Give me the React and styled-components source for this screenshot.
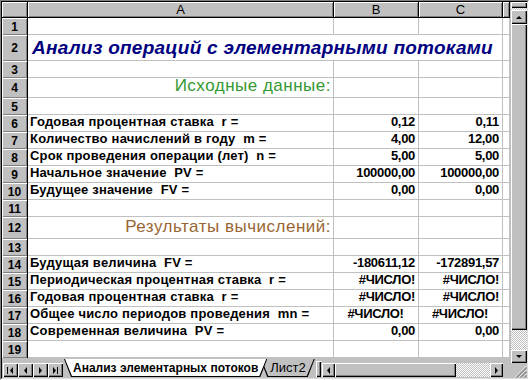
import styled, { createGlobalStyle, css } from "styled-components";

const GlobalStyle = createGlobalStyle`
  html, body { margin: 0; padding: 0; background: #c0c0c0; }
  body { font-family: "Liberation Sans", Arial, sans-serif; }
`;

const raised = css`
  background: #c0c0c0;
  box-shadow: inset 1px 1px #fff, inset -1px -1px #000, inset -2px -2px #808080;
`;

const dither = css`
  background: repeating-conic-gradient(#c0c0c0 0 25%, #fff 0 50%) 0 0 / 2px 2px;
`;

const Window = styled.div`
  width: 529px;
  height: 380px;
  box-sizing: border-box;
  border: 1px solid;
  border-color: #808080 #fff #fff #808080;
  background: #c0c0c0;
`;

const Inner = styled.div`
  height: 100%;
  box-sizing: border-box;
  border: 1px solid;
  border-color: #000 #dfdfdf #dfdfdf #000;
  display: flex;
`;

const LeftCol = styled.div`
  width: 508px;
  display: flex;
  flex-direction: column;
`;

const RightCol = styled.div`
  width: 17px;
  display: flex;
  flex-direction: column;
`;

const Sheet = styled.div`
  height: 356px;
  display: grid;
  grid-template-columns: 26px 306px 85px 84px 7px;
  grid-template-rows: ${(p) => p.$rows.map((h) => h + "px").join(" ")};
  background: #fff;
  overflow: hidden;
`;

const Corner = styled.div`
  background: #c0c0c0;
  border-right: 1px solid #000;
  border-bottom: 1px solid #000;
  box-shadow: inset 1px 1px #fff, inset -1px -1px #808080;
`;

const ColHead = styled.div`
  display: flex;
  align-items: center;
  justify-content: center;
  background: #c0c0c0;
  border-right: 1px solid #000;
  border-bottom: 1px solid #000;
  box-shadow: inset 1px 1px #fff, inset -1px -1px #808080;
  font-size: 13px;
  color: #000;
`;

const RowHead = styled.div`
  display: flex;
  align-items: center;
  justify-content: center;
  background: #c0c0c0;
  border-right: 1px solid #000;
  box-shadow: inset 1px 1px #fff, inset -1px -1px #808080;
  font-size: 12px;
  font-weight: bold;
  color: #000;
`;

const Cell = styled.div`
  box-sizing: border-box;
  grid-column: span ${(p) => p.$span || 1};
  display: flex;
  align-items: flex-end;
  justify-content: ${(p) =>
    p.$align === "right" ? "flex-end" : p.$align === "center" ? "center" : "flex-start"};
  padding: 0 ${(p) => p.$padR ?? 3}px 1px ${(p) => p.$padL ?? 2}px;
  border-right: 1px solid #c0c0c0;
  border-bottom: 1px solid #c0c0c0;
  white-space: pre;
  font-size: ${(p) => p.$size || 13}px;
  font-weight: ${(p) => p.$weight || "bold"};
  font-style: ${(p) => (p.$italic ? "italic" : "normal")};
  letter-spacing: ${(p) => p.$ls ?? 0}px;
  color: ${(p) => p.$color || "#000"};
  line-height: 1.15;
`;

const BottomBar = styled.div`
  flex: 1;
  display: flex;
  align-items: flex-end;
  padding: 0 0 1px 1px;
  background: #c0c0c0;
`;

const NavBtn = styled.div`
  ${raised};
  width: 15px;
  height: 14px;
  display: flex;
  align-items: center;
  justify-content: center;
`;

const Tabs = styled.div`
  display: flex;
  height: 18px;
  margin-left: 1px;
`;

const TabShape = styled.div`
  position: relative;
  z-index: ${(p) => (p.$active ? 2 : 1)};
  margin-left: ${(p) => (p.$first ? 0 : -7)}px;
  padding: 0 1px 1px;
  background: #000;
  clip-path: polygon(0 0, 100% 0, calc(100% - 7px) 100%, 7px 100%);
`;

const TabFace = styled.div`
  height: 100%;
  display: flex;
  align-items: center;
  padding: 0 ${(p) => (p.$active ? 8 : 8)}px 0 ${(p) => (p.$active ? 8 : 9)}px;
  background: ${(p) => (p.$active ? "#fff" : "#c0c0c0")};
  clip-path: polygon(0 0, 100% 0, calc(100% - 7px) 100%, 7px 100%);
  font-size: ${(p) => (p.$active ? 12 : 13)}px;
  font-weight: ${(p) => (p.$active ? "bold" : "normal")};
  color: #000;
  white-space: nowrap;
`;

const Splitter = styled.div`
  ${raised};
  width: 5px;
  height: 16px;
  margin: 0 1px 0 1px;
`;

const ScrollBtn = styled.div`
  ${raised};
  width: ${(p) => p.$w || 13}px;
  height: ${(p) => p.$h || 14}px;
  flex-shrink: 0;
  display: flex;
  align-items: center;
  justify-content: center;
`;

const HTrack = styled.div`
  ${dither};
  flex: 1;
  height: 14px;
  display: flex;
`;

const HThumb = styled.div`
  ${raised};
  width: 121px;
  height: 14px;
`;

const Gap = styled.div`
  width: 7px;
`;

const VScroll = styled.div`
  flex: 1;
  display: flex;
  flex-direction: column;
  ${dither};
  border-left: 1px solid #c0c0c0;
`;

const SplitBox = styled.div`
  ${raised};
  height: 6px;
  margin-bottom: 2px;
`;

const VThumb = styled.div`
  ${raised};
  height: 306px;
`;

const VTrack = styled.div`
  flex: 1;
`;

const Grip = styled.div`
  height: 15px;
  background: #c0c0c0;
  display: flex;
  align-items: flex-end;
  justify-content: flex-end;
`;

const Arrow = ({ dir, bar }) => {
  const pts = {
    up: "4,1 1,4 7,4",
    down: "1,1 7,1 4,4",
    left: "4,0 4,7 1,3.5",
    right: "1,0 1,7 4,3.5",
  }[dir];
  const vertical = dir === "up" || dir === "down";
  return (
    <svg width={vertical ? 8 : bar ? 7 : 5} height={vertical ? 5 : 7} viewBox={vertical ? "0 0 8 5" : bar ? "0 0 7 7" : "0 0 5 7"}>
      {bar === "left" && <rect x="0" y="0" width="1" height="7" fill="#000" />}
      <polygon points={pts} fill="#000" transform={bar === "left" ? "translate(2 0)" : undefined} />
      {bar === "right" && <rect x="5" y="0" width="1" height="7" fill="#000" />}
    </svg>
  );
};

const rowHeights = [16, 17, 26, 17, 20, 17, 17, 17, 17, 17, 17, 17, 22, 17, 17, 17, 17, 17, 17, 17];

const rows = [
  {},
  { title: "Анализ операций с элементарными потоками" },
  {},
  { heading: "Исходные данные:", color: "#339933" },
  {},
  { a: "Годовая процентная ставка  r =", b: "0,12", c: "0,11" },
  { a: "Количество начислений в году  m =", b: "4,00", c: "12,00" },
  { a: "Срок проведения операции (лет)  n =", b: "5,00", c: "5,00" },
  { a: "Начальное значение  PV =", b: "100000,00", c: "100000,00" },
  { a: "Будущее значение  FV =", b: "0,00", c: "0,00" },
  {},
  { heading: "Результаты вычислений:", color: "#996633" },
  {},
  { a: "Будущая величина  FV =", b: "-180611,12", c: "-172891,57" },
  { a: "Периодическая процентная ставка  r =", b: "#ЧИСЛО!", c: "#ЧИСЛО!" },
  { a: "Годовая процентная ставка  r =", b: "#ЧИСЛО!", c: "#ЧИСЛО!" },
  { a: "Общее число периодов проведения  mn =", b: "#ЧИСЛО!", c: "#ЧИСЛО!", center: true },
  { a: "Современная величина  PV =", b: "0,00", c: "0,00" },
  {},
];

export default function App() {
  return (
    <>
      <GlobalStyle />
      <Window>
        <Inner>
          <LeftCol>
            <Sheet $rows={rowHeights}>
              <Corner />
              <ColHead>A</ColHead>
              <ColHead>B</ColHead>
              <ColHead>C</ColHead>
              <ColHead />
              {rows.map((r, i) => {
                const cells = [<RowHead key="h">{i + 1}</RowHead>];
                if (r.title) {
                  cells.push(
                    <Cell key="a" $span={3} $size={19} $ls={0.25} $italic $color="#000080" $padL={4}>
                      {r.title}
                    </Cell>
                  );
                } else if (r.heading) {
                  cells.push(
                    <Cell key="a" $align="right" $size={17} $ls={0.5} $weight="normal" $color={r.color} $padR={2}>
                      {r.heading}
                    </Cell>,
                    <Cell key="b" />,
                    <Cell key="c" />
                  );
                } else {
                  const al = r.center ? "center" : "right";
                  cells.push(
                    <Cell key="a" $ls={0.2}>{r.a}</Cell>,
                    <Cell key="b" $align={al} $ls={-0.3}>{r.b}</Cell>,
                    <Cell key="c" $align={al} $ls={-0.3}>{r.c}</Cell>
                  );
                }
                cells.push(<Cell key="d" />);
                return cells;
              })}
            </Sheet>
            <BottomBar>
              <NavBtn><Arrow dir="left" bar="left" /></NavBtn>
              <NavBtn><Arrow dir="left" /></NavBtn>
              <NavBtn><Arrow dir="right" /></NavBtn>
              <NavBtn><Arrow dir="right" bar="right" /></NavBtn>
              <Tabs>
                <TabShape $active $first>
                  <TabFace $active>Анализ элементарных потоков</TabFace>
                </TabShape>
                <TabShape>
                  <TabFace>Лист2</TabFace>
                </TabShape>
              </Tabs>
              <Splitter />
              <ScrollBtn><Arrow dir="left" /></ScrollBtn>
              <HTrack>
                <HThumb />
              </HTrack>
              <ScrollBtn><Arrow dir="right" /></ScrollBtn>
              <Gap />
            </BottomBar>
          </LeftCol>
          <RightCol>
            <VScroll>
              <SplitBox />
              <ScrollBtn $w={16} $h={14}><Arrow dir="up" /></ScrollBtn>
              <VThumb />
              <VTrack />
              <ScrollBtn $w={16} $h={13}><Arrow dir="down" /></ScrollBtn>
            </VScroll>
            <Grip>
              <svg width="15" height="15" viewBox="0 0 15 15">
                {[0, 4, 8].map((o) => (
                  <g key={o}>
                    <line x1={3 + o} y1="14.5" x2="14.5" y2={3 + o} stroke="#fff" strokeWidth="1" />
                    <line x1={4 + o} y1="14.5" x2="14.5" y2={4 + o} stroke="#808080" strokeWidth="1" />
                    <line x1={5 + o} y1="14.5" x2="14.5" y2={5 + o} stroke="#808080" strokeWidth="1" />
                  </g>
                ))}
              </svg>
            </Grip>
          </RightCol>
        </Inner>
      </Window>
    </>
  );
}
